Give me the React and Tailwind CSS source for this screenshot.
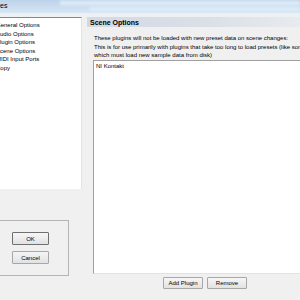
import React from 'react';

const pages = ['General Options', 'Audio Options', 'Plugin Options', 'Scene Options', 'MIDI Input Ports', 'Copy'];

const WinButton = ({ label, isDefault, className = '' }) => (
  <button
    className={`flex items-center justify-center bg-gradient-to-b from-[#f6f6f6] to-[#e2e2e2] text-[6px] leading-none text-black rounded-[1px] ${
      isDefault ? 'border border-[#6f6f6f]' : 'border border-[#a7a7a7]'
    } ${className}`}
  >
    {label}
  </button>
);

const App = () => {
  return (
    <div
      className="w-[300px] h-[300px] overflow-hidden bg-[#f0f0f0] text-black"
      style={{ fontFamily: '"Liberation Sans", Arial, sans-serif' }}
    >
      {/* Title bar (glass) */}
      <div className="h-[13px] bg-gradient-to-b from-[#bcd3ea] to-[#d6e6f5] relative overflow-hidden">
        <div className="absolute left-[60px] top-[1px] w-[240px] h-[4px] bg-[#e9f3fc] blur-[1.5px] opacity-80"></div>
        <div className="absolute left-[90px] top-[7px] w-[210px] h-[4px] bg-[#e4f0fb] blur-[1.5px] opacity-80"></div>
        <span className="absolute left-0 top-[2px] text-[7px] leading-none text-black">es</span>
      </div>
      <div className="h-[4px] bg-[#eef1f4]"></div>

      <div className="flex">
        {/* Left column */}
        <div className="w-[87px] shrink-0 flex flex-col">
          <div className="ml-[-8px] w-[90px] h-[172px] bg-white border-t border-[#828790] border-r border-r-[#e3e3e3] pl-[4px] pt-[3px]">
            {pages.map(p => (
              <div key={p} className="text-[6px] leading-[8.5px] whitespace-nowrap">{p}</div>
            ))}
          </div>
          <div className="ml-[-8px] mt-[31px] w-[77px] h-[56px] border border-[#b5b5b5] flex flex-col items-start pl-[19px] pt-[11px] gap-[6px]">
            <WinButton label="OK" isDefault className="w-[37px] h-[13px]" />
            <WinButton label="Cancel" className="w-[37px] h-[13px]" />
          </div>
        </div>

        {/* Right column */}
        <div className="flex-1 flex flex-col">
          <div className="h-[10px] bg-gradient-to-r from-[#d3d9e2] via-[#dbe0e7] to-[#eceff2] flex items-center pl-[3px]">
            <span className="text-[7px] font-bold leading-none">Scene Options</span>
          </div>
          <div className="pl-[7px] pt-[7px] text-[6px] leading-[8px] whitespace-nowrap">
            <div>These plugins will not be loaded with new preset data on scene changes:</div>
            <div className="mt-[1px]">This is for use primarily with plugins that take too long to load presets (like some samplers</div>
            <div>which must load new sample data from disk)</div>
          </div>
          <div className="ml-[6px] mt-[1px] h-[214px] bg-white border-t border-l border-[#a0a0a0] border-b border-b-[#e3e3e3] pl-[2px] pt-[1px]">
            <div className="text-[6px] leading-[8px]">NI Kontakt</div>
          </div>
          <div className="flex gap-[4px] pl-[76px] pt-[3px]">
            <WinButton label="Add Plugin" className="w-[40px] h-[12px]" />
            <WinButton label="Remove" className="w-[40px] h-[12px]" />
          </div>
        </div>
      </div>
    </div>
  );
};

export default App;
